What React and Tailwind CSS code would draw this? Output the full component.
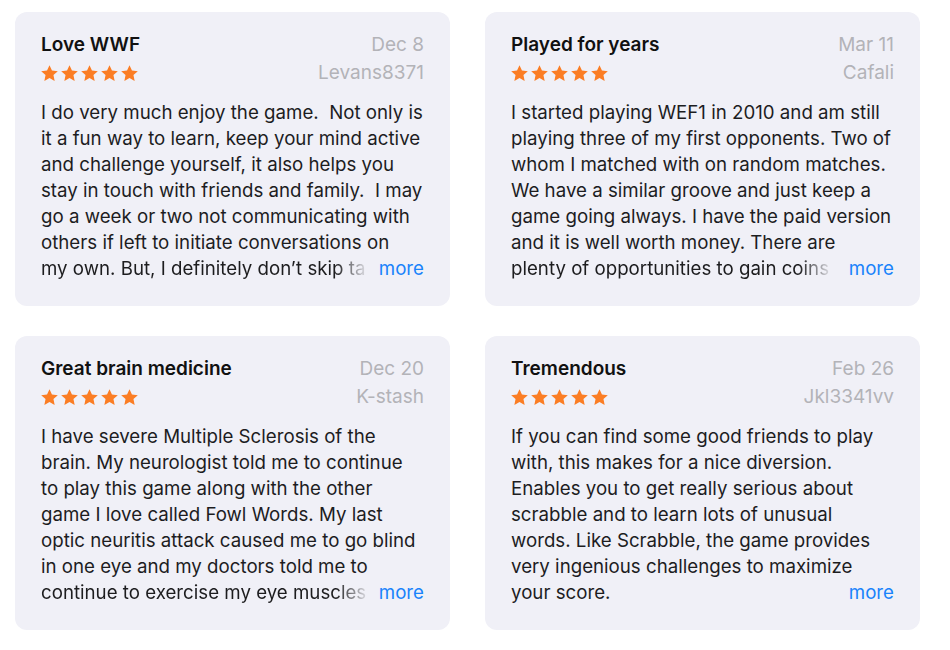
const reviews = [
  {
    title: "Love WWF",
    date: "Dec 8",
    user: "Levans8371",
    lines: [
      "I do very much enjoy the game.  Not only is",
      "it a fun way to learn, keep your mind active",
      "and challenge yourself, it also helps you",
      "stay in touch with friends and family.  I may",
      "go a week or two not communicating with",
      "others if left to initiate conversations on",
    ],
    last: "my own. But, I definitely don’t skip ta",
    fade: true,
  },
  {
    title: "Played for years",
    date: "Mar 11",
    user: "Cafali",
    lines: [
      "I started playing WEF1 in 2010 and am still",
      "playing three of my first opponents. Two of",
      "whom I matched with on random matches.",
      "We have a similar groove and just keep a",
      "game going always. I have the paid version",
      "and it is well worth money. There are",
    ],
    last: "plenty of opportunities to gain coins",
    fade: true,
  },
  {
    title: "Great brain medicine",
    date: "Dec 20",
    user: "K-stash",
    lines: [
      "I have severe Multiple Sclerosis of the",
      "brain. My neurologist told me to continue",
      "to play this game along with the other",
      "game I love called Fowl Words. My last",
      "optic neuritis attack caused me to go blind",
      "in one eye and my doctors told me to",
    ],
    last: "continue to exercise my eye muscles",
    fade: true,
  },
  {
    title: "Tremendous",
    date: "Feb 26",
    user: "Jkl3341vv",
    lines: [
      "If you can find some good friends to play",
      "with, this makes for a nice diversion.",
      "Enables you to get really serious about",
      "scrabble and to learn lots of unusual",
      "words. Like Scrabble, the game provides",
      "very ingenious challenges to maximize",
    ],
    last: "your score.",
    fade: false,
  },
];

const Star = () => (
  <svg viewBox="0 0 24 24" className="h-[19px] w-[19px]">
    <polygon
      fill="#fb7d24"
      points="12,1.5 15.1,8.2 22.5,9 17,14 18.5,21.5 12,17.8 5.5,21.5 7,14 1.5,9 8.9,8.2"
    />
  </svg>
);

const ReviewCard = ({ review }) => (
  <article className="h-[294px] rounded-[12px] bg-[#f0f0f7] px-[26px] pt-[19px]">
    <div className="flex justify-between">
      <div>
        <h2 className="h-[28px] text-[19px] leading-[28px] font-semibold text-[#111]">{review.title}</h2>
        <div className="-ml-[1px] flex h-[28px] items-center gap-[1px]">
          {[0, 1, 2, 3, 4].map((i) => (
            <Star key={i} />
          ))}
        </div>
      </div>
      <div className="text-right text-[19px] leading-[28px] text-[#b3b3b8]">
        <p>{review.date}</p>
        <p>{review.user}</p>
      </div>
    </div>
    <div className="mt-[13px] text-[18.7px] leading-[26px] text-[#1d1d1f]">
      {review.lines.map((line, idx) => (
        <p key={idx} className="whitespace-pre">{line}</p>
      ))}
      <div className="flex">
        <p
          className={
            review.fade
              ? "whitespace-pre [mask-image:linear-gradient(to_right,#000_calc(100%-30px),rgba(0,0,0,0.12)_100%)]"
              : "whitespace-pre"
          }
        >
          {review.last}
        </p>
        <span className="ml-auto text-[#1a83fb]">more</span>
      </div>
    </div>
  </article>
);

const App = () => {
  return (
    <div
      className="min-h-[650px] w-[950px] bg-white pl-[15px] pt-[12px]"
      style={{ fontFamily: "Inter, 'Noto Sans', sans-serif" }}
    >
      <div className="grid grid-cols-[435px_435px] gap-x-[35px] gap-y-[30px]">
        {reviews.map((review) => (
          <ReviewCard key={review.title} review={review} />
        ))}
      </div>
    </div>
  );
};

export default App;
